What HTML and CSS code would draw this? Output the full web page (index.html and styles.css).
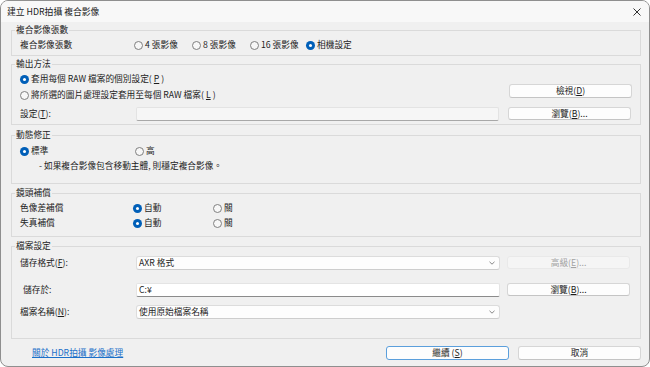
FILE: index.html
```html
<!DOCTYPE html>
<html lang="zh-Hant">
<head>
<meta charset="utf-8">
<title>建立 HDR拍攝 複合影像</title>
<link rel="stylesheet" href="styles.css">
</head>
<body>
<div class="window">
  <div class="titlebar">
    <span class="title">建立 HDR拍攝 複合影像</span>
    <svg class="close" width="8" height="8" viewBox="0 0 8 8"><path d="M0.5 0.5L7.5 7.5M7.5 0.5L0.5 7.5" stroke="#1c1c1c" stroke-width="0.9" fill="none"/></svg>
  </div>
  <div class="content">
    <section class="group g1">
      <div class="group-title">複合影像張數</div>
      <div class="row grid-g1">
        <span class="label">複合影像張數</span>
        <span class="radio"><span class="dot"></span>4 張影像</span>
        <span class="radio"><span class="dot"></span>8 張影像</span>
        <span class="radio"><span class="dot"></span>16 張影像</span>
        <span class="radio"><span class="dot on"></span>相機設定</span>
      </div>
    </section>

    <section class="group g2">
      <div class="group-title">輸出方法</div>
      <div class="split">
        <div class="stack">
          <span class="radio row-h"><span class="dot on"></span>套用每個 RAW 檔案的個別設定(<u>P</u>)</span>
          <span class="radio row-h"><span class="dot"></span>將所選的圖片處理設定套用至每個 RAW 檔案(<u>L</u>)</span>
        </div>
        <button class="btn btn-view">檢視(<u>D</u>)</button>
      </div>
      <div class="field-row g2-row3">
        <span class="label">設定(<u>T</u>):</span>
        <span class="input disabled-input"></span>
        <button class="btn btn-side">瀏覽(<u>B</u>)...</button>
      </div>
    </section>

    <section class="group g3">
      <div class="group-title">動態修正</div>
      <div class="row grid-g3 g3-row1">
        <span class="radio"><span class="dot on"></span>標準</span>
        <span class="radio"><span class="dot"></span>高</span>
      </div>
      <div class="row note">- 如果複合影像包含移動主體, 則穩定複合影像。</div>
    </section>

    <section class="group g4">
      <div class="group-title">鏡頭補償</div>
      <div class="row grid-g4 g4-row1">
        <span class="label">色像差補償</span>
        <span class="radio"><span class="dot on"></span>自動</span>
        <span class="radio"><span class="dot"></span>關</span>
      </div>
      <div class="row grid-g4 g4-row2">
        <span class="label">失真補償</span>
        <span class="radio"><span class="dot on"></span>自動</span>
        <span class="radio"><span class="dot"></span>關</span>
      </div>
    </section>

    <section class="group g5">
      <div class="group-title">檔案設定</div>
      <div class="field-row g5-row1">
        <span class="label">儲存格式(<u>F</u>):</span>
        <span class="select">AXR 格式<svg class="chev" width="6" height="4" viewBox="0 0 6 4"><path d="M0.5 0.8L3 3.2L5.5 0.8" stroke="#6a6a6a" stroke-width="0.8" fill="none"/></svg></span>
        <button class="btn btn-side disabled">高級(<u>E</u>)...</button>
      </div>
      <div class="field-row g5-row2">
        <span class="label indent">儲存於:</span>
        <span class="input">C:¥</span>
        <button class="btn btn-side">瀏覽(<u>B</u>)...</button>
      </div>
      <div class="field-row g5-row3">
        <span class="label">檔案名稱(<u>N</u>):</span>
        <span class="select">使用原始檔案名稱<svg class="chev" width="6" height="4" viewBox="0 0 6 4"><path d="M0.5 0.8L3 3.2L5.5 0.8" stroke="#6a6a6a" stroke-width="0.8" fill="none"/></svg></span>
      </div>
    </section>
  </div>
  <div class="footer">
    <a class="link" href="#">關於 HDR拍攝 影像處理</a>
    <div class="actions">
      <button class="btn btn-foot primary">繼續 (<u>S</u>)</button>
      <button class="btn btn-foot">取消</button>
    </div>
  </div>
</div>
</body>
</html>
```

FILE: styles.css
```css
* { box-sizing: border-box; }
html, body { margin: 0; padding: 0; }
body { width: 650px; height: 367px; background: #ffffff; }

.window {
  width: 650px;
  height: 367px;
  border: 1px solid #8f8f8f;
  border-radius: 8px;
  overflow: hidden;
  background: #f0f0f0;
  font-family: "Noto Sans CJK JP", "Noto Sans CJK TC", sans-serif;
  font-size: 8.7px;
  line-height: 14px;
  color: #1c1c1c;
  text-autospace: no-autospace;
  display: flex;
  flex-direction: column;
}
.window * { text-autospace: no-autospace; }

.titlebar {
  height: 21px;
  flex: none;
  background: #f8f8f8;
  display: flex;
  align-items: center;
  justify-content: space-between;
  padding: 0 8px 0 6px;
}
.title { font-size: 8.8px; line-height: 12px; }
.close { display: block; }

.content { padding: 0 8px 0 10px; flex: none; }

.group { border: 1px solid #dadada; }
.group-title {
  width: max-content;
  height: 12px;
  line-height: 12px;
  margin: -7px 0 0 3px;
  padding: 0 1px;
  background: #f0f0f0;
}

.g1 { margin-top: 8px; height: 26px; }
.g2 { margin-top: 8px; height: 61px; }
.g3 { margin-top: 10px; height: 49px; }
.g4 { margin-top: 9px; height: 44px; }
.g5 { margin-top: 9px; height: 93px; }

.row { height: 14px; padding-left: 8px; display: flex; align-items: center; }
.grid-g1 { display: grid; grid-template-columns: 114px 58px 58px 56px auto; margin-top: 2px; }
.grid-g3 { display: grid; grid-template-columns: 115px auto; }
.grid-g4 { display: grid; grid-template-columns: 113px 80px auto; }
.g3-row1 { margin-top: 3px; }
.g4-row1 { margin-top: 2px; }
.g4-row2 { margin-top: 1px; }
.note { margin-top: 1px; padding-left: 27px; }

.radio { display: flex; align-items: center; gap: 2px; height: 14px; white-space: nowrap; }
.dot {
  width: 9px;
  height: 9px;
  flex: none;
  border-radius: 50%;
  border: 1px solid #808080;
  background: #f7f7f7;
  display: flex;
  align-items: center;
  justify-content: center;
}
.dot.on { border: none; background: #005fb8; }
.dot.on::after {
  content: "";
  width: 3px;
  height: 3px;
  border-radius: 50%;
  background: #ffffff;
}

.split {
  display: flex;
  justify-content: space-between;
  margin-top: 2px;
  padding: 0 8px 0 8px;
}
.stack { display: flex; flex-direction: column; gap: 2px; }
.row-h { height: 14px; }
.btn-view { align-self: flex-end; margin-bottom: 4px; }

.field-row { display: flex; align-items: flex-start; padding: 0 8px 0 8px; }
.g2-row3 { margin-top: 5px; }
.g2-row3 .input { width: 363px; }
.g2-row3 .btn-side { margin-left: 9px; }
.g5-row1 { margin-top: 4px; }
.g5-row2 { margin-top: 13px; }
.g5-row3 { margin-top: 8px; }
.label { width: 116px; flex: none; line-height: 14px; white-space: nowrap; }
.label.indent { padding-left: 3px; }

.input {
  display: block;
  width: 364px;
  height: 14px;
  background: #ffffff;
  border: 1px solid #e4e4e4;
  border-bottom-color: #8b8b8b;
  border-radius: 2px;
  padding-left: 2px;
  line-height: 12px;
  flex: none;
}
.disabled-input { background: #f6f6f6; border-color: #e3e3e3; border-bottom-color: #a8a8a8; }

.select {
  display: flex;
  align-items: center;
  justify-content: space-between;
  width: 364px;
  height: 14px;
  background: #fdfdfd;
  border: 1px solid #dcdcdc;
  border-bottom-color: #cdcdcd;
  border-radius: 3px;
  padding: 0 4px 0 2px;
  line-height: 12px;
  flex: none;
}
.chev { display: block; }

.btn {
  font: inherit;
  color: #1c1c1c;
  width: 123px;
  height: 14px;
  padding: 0;
  line-height: 12px;
  background: #fdfdfd;
  border: 1px solid #d6d6d6;
  border-bottom-color: #c4c4c4;
  border-radius: 3px;
  text-align: center;
  flex: none;
}
.btn-side { height: 13px; line-height: 11px; margin-left: 7px; }
.btn.disabled { background: #f5f5f5; border-color: #e9e9e9; color: #a3a3a3; }

.footer {
  margin-top: 7px;
  height: 14px;
  display: flex;
  align-items: center;
  justify-content: space-between;
  padding: 0 8px 0 31px;
  flex: none;
}
.link { color: #1a6fc9; text-decoration: underline; line-height: 12px; }
.actions { display: flex; gap: 9px; }
.btn-foot { height: 14px; }
.primary { border: 1px solid #5b9fdc; }
```
